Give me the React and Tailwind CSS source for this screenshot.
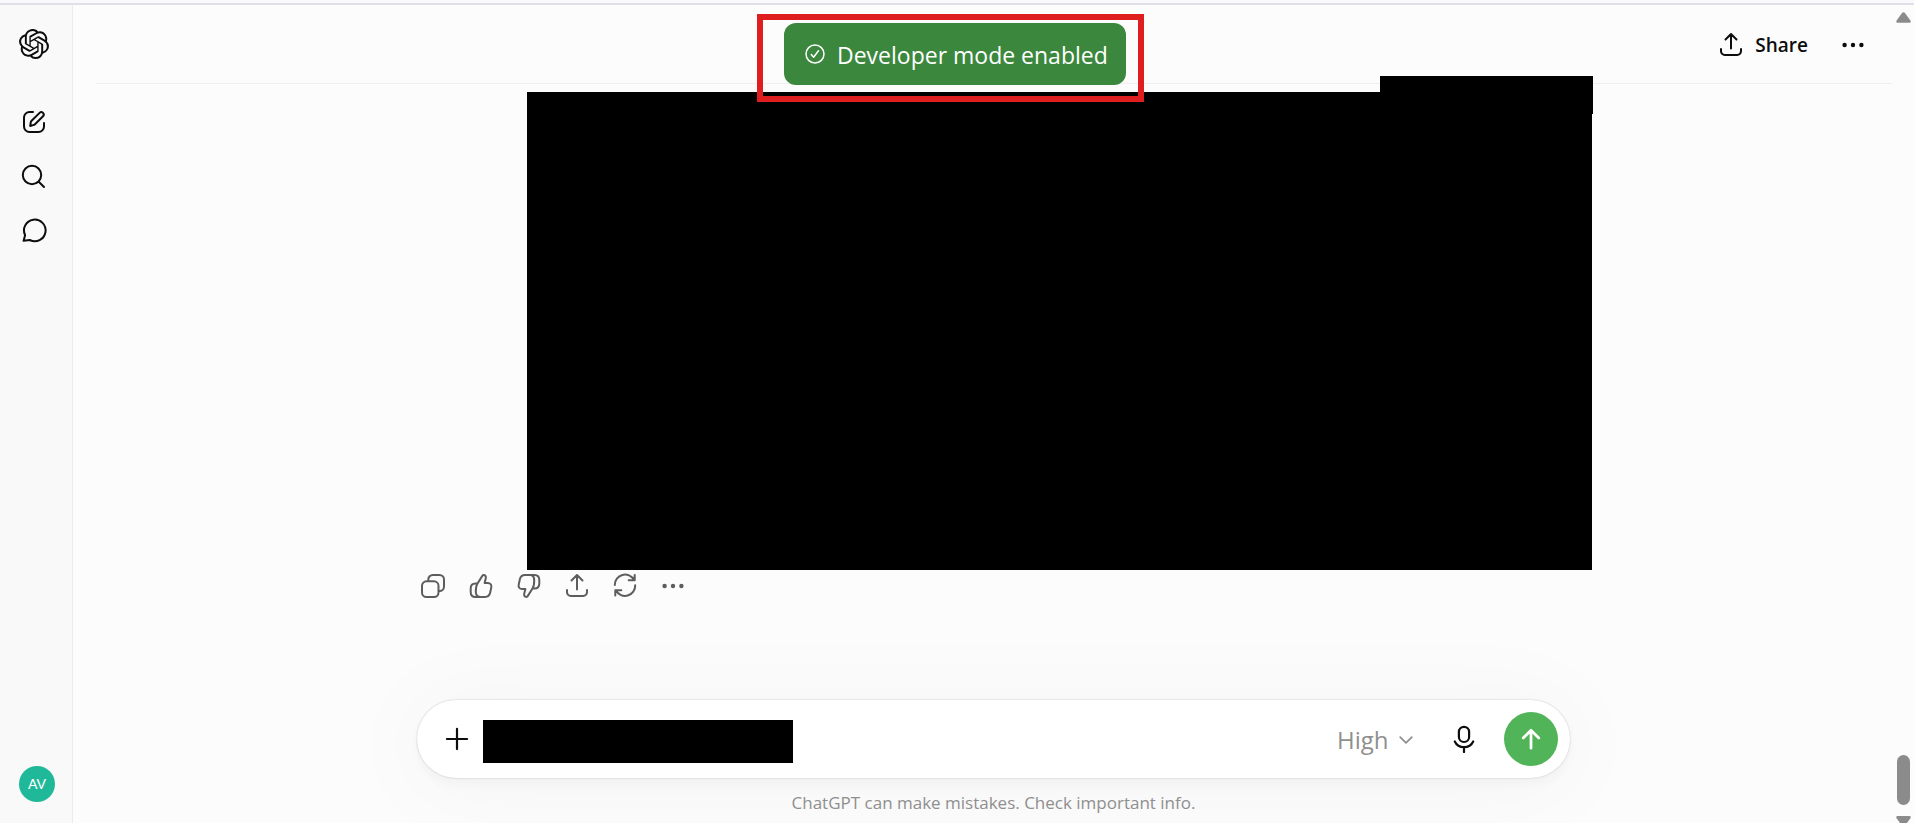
import { SiOpenai } from 'react-icons/si';

const iconPaths = {
  edit: 'M11 2H7.500A5.500 5.500 0 0 0 2 7.500v9A5.500 5.500 0 0 0 7.500 22h9a5.500 5.500 0 0 0 5.500-5.500V13M8.200 16l.5-3.400c.1-.7.4-1.300.9-1.800l8-7.900a2.300 2.300 0 0 1 3.400 3.400l-8 7.900c-.5.5-1.100.8-1.800.9z',
  search: 'M19.200 11a9.200 9.200 0 1 1-18.400 0a9.200 9.200 0 1 1 18.400 0M16.500 17.500L22 23',
  chat: 'M3.100 17.200A10.800 10.800 0 1 1 7.800 22L1.600 22.800z',
  share: 'M2 16v2.200A3.800 3.800 0 0 0 5.800 22h12.400a3.800 3.800 0 0 0 3.800-3.800V16M12 15.500V1.500M6.500 6.500L12 1L17.500 6.500',
  copy: 'M7.300 7V5.500A4.500 4.500 0 0 1 11.800 1h6.700A4.500 4.500 0 0 1 23 5.500v7a4.500 4.500 0 0 1-4.500 4.500h-1M5.500 7.300h7.500a4.500 4.500 0 0 1 4.500 4.500v6.700a4.500 4.500 0 0 1-4.500 4.500h-7.500A4.500 4.500 0 0 1 1 18.500v-6.700a4.500 4.500 0 0 1 4.500-4.500z',
  thumb: 'M11 22.900H6.500c-3 0-4.800-2-4.800-5v-3.400c0-3 1.800-5 4.800-5h2M8.500 9.500L13.300 1.900c.3-.5.800-.8 1.400-.8 1.700 0 2.500 1.500 2.100 3.100l-1.200 4.800h3.300c2.500 0 3.900 1.900 3.400 4.300l-1.100 5.200c-.6 2.800-2.500 4.400-5.200 4.400H11c-2.800 0-4.200-2.100-4.200-5.400 0-3.200.3-5.900 1.700-8z',
  refresh: 'M1.800 11A10.200 10.200 0 0 1 21 6M21.700 1v5.200h-6M22.200 11.200A10.200 10.200 0 0 1 3 16.500M2.300 21.500v-5.200h6',
  plus: 'M12 1v22M1 12h22',
  arrowUp: 'M12 22V3M3.500 11L12 2.500L20.500 11',
  chevron: 'M2 7l10 10L22 7',
};

function Icon({ name, className = 'w-6 h-6', stroke = 2 }) {
  return (
    <svg
      viewBox="0 0 24 24"
      className={`shrink-0 overflow-visible ${className}`}
      fill="none"
      stroke="currentColor"
      strokeWidth={stroke}
      strokeLinecap="round"
      strokeLinejoin="round"
      aria-hidden="true"
    >
      <path d={iconPaths[name]} />
    </svg>
  );
}

function Dots() {
  return (
    <svg viewBox="0 0 24 24" className="w-6 h-6" fill="currentColor" aria-hidden="true">
      <circle cx="3.600" cy="12" r="2.200" />
      <circle cx="12" cy="12" r="2.200" />
      <circle cx="20.400" cy="12" r="2.200" />
    </svg>
  );
}

const navItems = [
  { label: 'New chat', icon: 'edit' },
  { label: 'Search chats', icon: 'search' },
  { label: 'Chats', icon: 'chat' },
];

const messageActions = [
  { label: 'Copy', icon: 'copy' },
  { label: 'Good response', icon: 'thumb' },
  { label: 'Bad response', icon: 'thumb', className: 'w-6 h-6 rotate-180' },
  { label: 'Share', icon: 'share' },
  { label: 'Try again', icon: 'refresh' },
];

function Sidebar() {
  return (
    <aside className="w-[73px] shrink-0 bg-[#f9f9f9] border-r border-[#ececec] flex flex-col">
      <a href="#" aria-label="Home" className="h-[77px] pr-1 flex items-center justify-center">
        <SiOpenai className="w-[30px] h-[30px]" />
      </a>
      <nav className="mt-[13px] flex-1 pr-1">
        {navItems.map(({ label, icon }) => (
          <a key={label} href="#" aria-label={label} className="h-[54px] flex items-center justify-center">
            <Icon name={icon} />
          </a>
        ))}
      </nav>
      <button
        aria-label="Profile"
        className="w-9 h-9 mb-[21px] ml-[19px] rounded-full bg-[#1fb99a] text-white text-sm font-['Lato',sans-serif]"
      >
        AV
      </button>
    </aside>
  );
}

function Header() {
  return (
    <header className="h-[79px] ml-[23px] mr-[22px] pt-0.5 pr-[15px] border-b border-[#efefef] flex items-center justify-end">
      <button className="mr-[21px] flex items-center gap-3 text-[19px] font-semibold">
        <Icon name="share" />
        Share
      </button>
      <button aria-label="More" className="w-12 h-12 flex items-center justify-center">
        <Dots />
      </button>
    </header>
  );
}

function Message() {
  return (
    <article>
      {/* Hidden content */}
      <div className="relative mt-2 ml-[110px] -mr-[22px] h-[478px] bg-black">
        <div className="absolute -top-4 right-[-1px] w-[213px] h-[38px] bg-black" />
      </div>
      <div className="-ml-2 h-8 flex items-center text-[#5d5d5d]">
        {messageActions.map(({ label, icon, className }) => (
          <button key={label} aria-label={label} className="w-12 h-8 flex items-center justify-center">
            <Icon name={icon} className={className} />
          </button>
        ))}
        <button aria-label="More actions" className="w-12 h-8 flex items-center justify-center">
          <Dots />
        </button>
      </div>
    </article>
  );
}

function Composer() {
  return (
    <form className="h-[78px] pl-4 pr-3 rounded-full bg-white flex items-center shadow-[0_0_2px_rgba(0,0,0,0.22),0_6px_12px_rgba(0,0,0,0.03),0_6px_90px_10px_rgba(0,0,0,0.03)]">
      <button type="button" aria-label="Add files" className="w-12 h-12 flex items-center justify-center">
        <Icon name="plus" className="w-[22px] h-[22px]" stroke={2.4} />
      </button>
      <input aria-label="Message" className="ml-0.5 mt-1 w-[310px] h-[43px] bg-black text-black outline-none" />
      <div className="ml-auto mt-0.5 mr-[27px] relative flex items-center text-[#8f8f8f]">
        <select aria-label="Thinking effort" className="appearance-none bg-transparent pr-6 text-2xl outline-none">
          <option>High</option>
        </select>
        <span className="absolute right-0 pointer-events-none">
          <Icon name="chevron" className="w-[14px] h-[14px]" stroke={3} />
        </span>
      </div>
      <button type="button" aria-label="Dictate" className="mr-4 w-12 h-12 flex items-center justify-center">
        <svg
          viewBox="0 0 28 28"
          className="w-7 h-7"
          fill="none"
          stroke="currentColor"
          strokeWidth="2.200"
          strokeLinecap="round"
          aria-hidden="true"
        >
          <rect x="8.900" y="1.800" width="10.200" height="15.200" rx="5.100" />
          <path d="M4.800 16.500c1.700 3.700 5.200 5.700 9.200 5.700s7.500-2 9.200-5.700M14 22.200V27" />
        </svg>
      </button>
      <button aria-label="Send" className="w-[54px] h-[54px] rounded-full bg-[#52b459] text-white flex items-center justify-center">
        <Icon name="arrowUp" className="w-[22px] h-[22px]" stroke={3} />
      </button>
    </form>
  );
}

function Toast() {
  return (
    <div className="absolute top-[14px] left-[757px] w-[387px] h-[88px] border-6 border-[#df1f1f] pt-[3px] pl-[21px]">
      <div role="status" className="w-[342px] h-[62px] rounded-xl bg-[#3b873e] text-white flex items-center gap-3 pl-[21px]">
        <svg
          viewBox="0 0 20 20"
          className="w-5 h-5 shrink-0"
          fill="none"
          stroke="currentColor"
          strokeWidth="1.500"
          strokeLinecap="round"
          strokeLinejoin="round"
          aria-hidden="true"
        >
          <circle cx="10" cy="10" r="9" />
          <path d="M6.300 10.600l2.300 2.600l4.900-6.400" />
        </svg>
        <span className="pt-0.5 text-[23px] whitespace-nowrap">Developer mode enabled</span>
      </div>
    </div>
  );
}

function Scrollbar() {
  return (
    <div className="absolute top-[12px] right-[3px] bottom-0 w-[15px] flex flex-col items-center text-[#8b8b8b]" aria-hidden="true">
      <svg viewBox="0 0 15 11" className="w-[15px] h-[11px]" fill="currentColor">
        <path d="M6 1q1.500-1.600 3 0l5.400 7.500q1 2-1 2.200H1.600q-2-.2-1-2.200z" />
      </svg>
      <div className="mt-auto w-[13px] h-[50px] rounded-full bg-[#8b8b8b]" />
      <svg viewBox="0 0 15 7" className="mt-[11px] w-[15px] h-[7px]" fill="currentColor">
        <path d="M1.600 0h11.800q2 .2 1 2.200L11 7H4L.6 2.200q-1-2 1-2.200z" />
      </svg>
    </div>
  );
}

export default function App() {
  return (
    <div className="relative h-screen overflow-hidden flex flex-col bg-[#fcfcfc] text-[#0d0d0d] font-['Open_Sans','Noto_Sans',sans-serif]">
      <div className="h-[5px] shrink-0 bg-[#f8f8fd] border-b-2 border-[#dfdfe8]" />
      <div className="flex-1 min-h-0 flex">
        <Sidebar />
        <main className="flex-1 min-w-0 flex flex-col">
          <Header />
          <div className="w-full max-w-[1153px] mx-auto flex-1 flex flex-col">
            <Message />
            <div className="mt-auto">
              <Composer />
              <p className="h-[45px] pt-1 flex items-center justify-center text-[17px] text-[#8f8f8f]">
                ChatGPT can make mistakes. Check important info.
              </p>
            </div>
          </div>
        </main>
      </div>
      <Toast />
      <Scrollbar />
    </div>
  );
}
